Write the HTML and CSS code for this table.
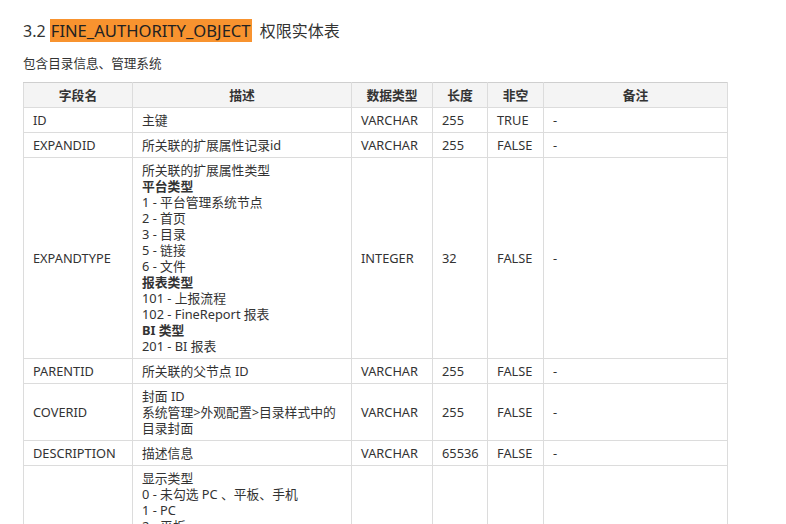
FILE: index.html
```html
<!DOCTYPE html>
<html lang="zh-CN">
<head>
<meta charset="utf-8">
<title>FINE_AUTHORITY_OBJECT</title>
<link rel="stylesheet" href="styles.css">
</head>
<body>
<div class="doc">
  <h3 class="title">3.2 <span class="hl">FINE_AUTHORITY_OBJECT</span> 权限实体表</h3>
  <p class="sub">包含目录信息、管理系统</p>
  <table class="tbl">
    <colgroup>
      <col class="c1"><col class="c2"><col class="c3"><col class="c4"><col class="c5"><col class="c6">
    </colgroup>
    <thead>
      <tr><th>字段名</th><th>描述</th><th>数据类型</th><th>长度</th><th>非空</th><th>备注</th></tr>
    </thead>
    <tbody>
      <tr><td>ID</td><td>主键</td><td>VARCHAR</td><td>255</td><td>TRUE</td><td>-</td></tr>
      <tr><td>EXPANDID</td><td>所关联的扩展属性记录id</td><td>VARCHAR</td><td>255</td><td>FALSE</td><td>-</td></tr>
      <tr><td>EXPANDTYPE</td><td>所关联的扩展属性类型<br><b>平台类型</b><br>1 - 平台管理系统节点<br>2 - 首页<br>3 - 目录<br>5 - 链接<br>6 - 文件<br><b>报表类型</b><br>101 - 上报流程<br>102 - FineReport 报表<br><b>BI 类型</b><br>201 - BI 报表</td><td>INTEGER</td><td>32</td><td>FALSE</td><td>-</td></tr>
      <tr><td>PARENTID</td><td>所关联的父节点 ID</td><td>VARCHAR</td><td>255</td><td>FALSE</td><td>-</td></tr>
      <tr><td>COVERID</td><td>封面 ID<br>系统管理&gt;外观配置&gt;目录样式中的目录封面</td><td>VARCHAR</td><td>255</td><td>FALSE</td><td>-</td></tr>
      <tr><td>DESCRIPTION</td><td>描述信息</td><td>VARCHAR</td><td>65536</td><td>FALSE</td><td>-</td></tr>
      <tr><td>DISPLAYTYPE</td><td>显示类型<br>0 - 未勾选 PC 、平板、手机<br>1 - PC<br>2 - 平板<br>3 - PC、平板<br>4 - 手机<br>5 - PC、手机<br>6 - 平板、手机<br>7 - PC 、平板、手机</td><td>INTEGER</td><td>32</td><td>FALSE</td><td>-</td></tr>
    </tbody>
  </table>
</div>
</body>
</html>
```
FILE: styles.css
```css
html, body {
  margin: 0;
  padding: 0;
  background: #fff;
}
body {
  font-family: "Noto Sans", "Noto Sans CJK SC", sans-serif;
  color: #333;
  font-size: 13px;
  line-height: 16px;
}
.doc {
  padding: 21px 23px 0 23px;
}
.title {
  margin: 0;
  height: 21px;
  font-size: 16px;
  font-weight: normal;
  line-height: 21px;
  color: #333;
}
.hl {
  background: #f8932f;
  color: #222;
  padding: 0 1px;
  margin-right: 4px;
  font-size: 16.6px;
  line-height: 16px;
}
.sub {
  margin: 14px 0 10px 0;
  font-size: 12.6px;
}
.tbl {
  border-collapse: collapse;
  width: 704px;
  table-layout: fixed;
}
.c1 { width: 109px; }
.c2 { width: 219px; }
.c3 { width: 81px; }
.c4 { width: 55px; }
.c5 { width: 56px; }
.c6 { width: 184px; }
.tbl th, .tbl td {
  border: 1px solid #dcdcdc;
  padding: 4px 9px;
  vertical-align: middle;
  text-align: left;
  font-size: 12.8px;
}
.tbl th {
  background: #f4f4f4;
  font-weight: bold;
  text-align: center;
  border-top-color: #cfcfcf;
}
.tbl b {
  font-weight: bold;
}
```
